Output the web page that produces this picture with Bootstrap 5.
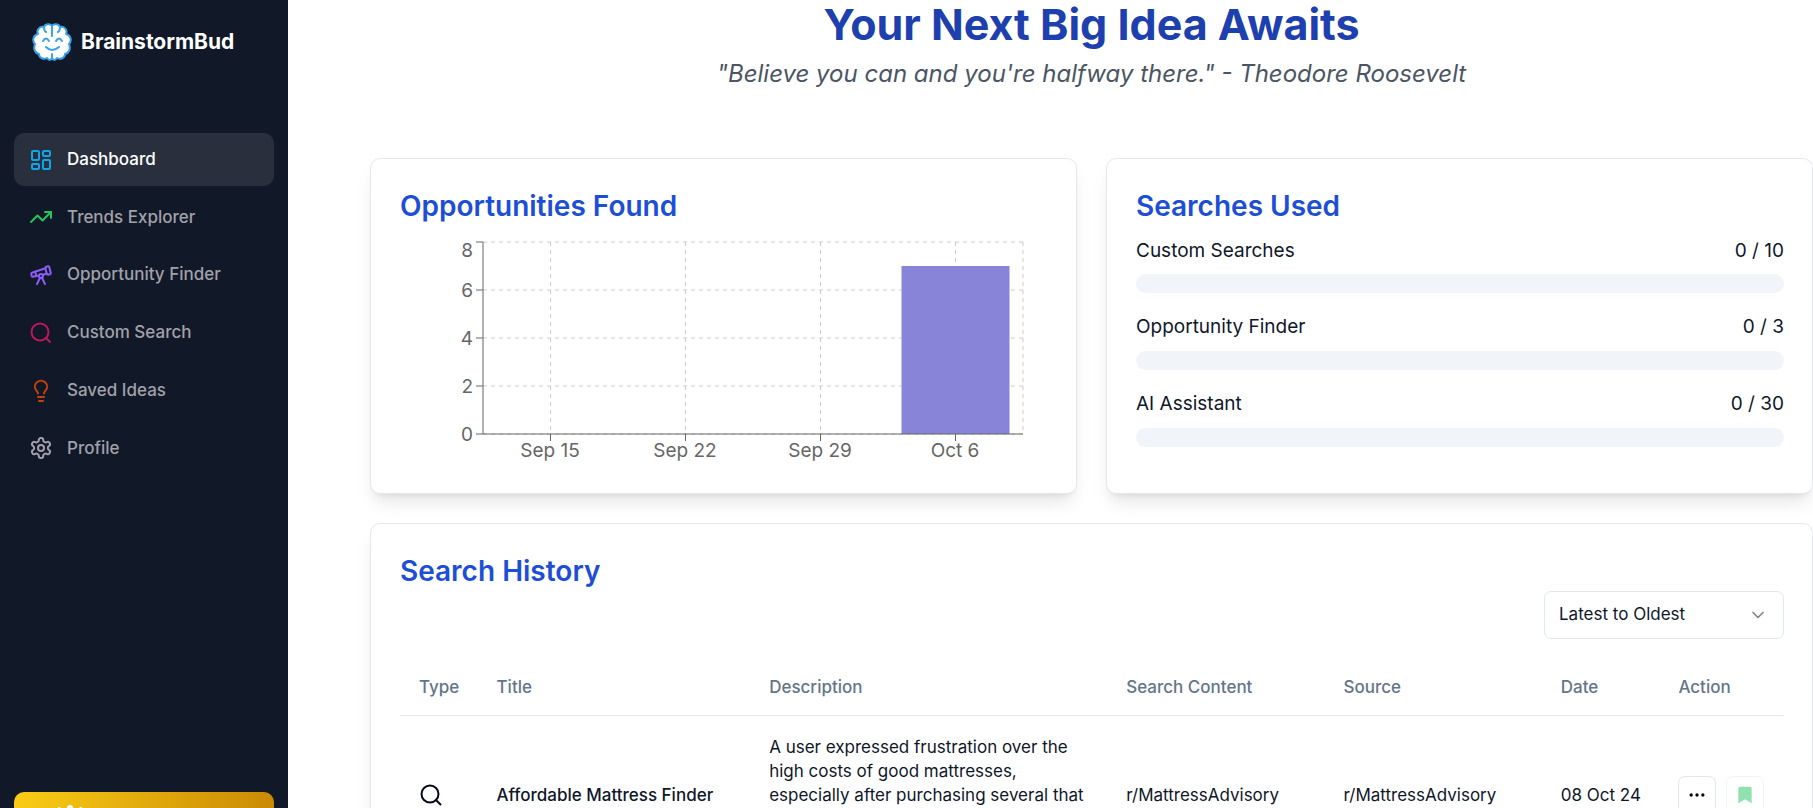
<!DOCTYPE html>
<html lang="en">
<head>
<meta charset="utf-8">
<meta name="viewport" content="width=device-width, initial-scale=1">
<title>BrainstormBud</title>
<link href="https://cdn.jsdelivr.net/npm/bootstrap@5.3.0/dist/css/bootstrap.min.css" rel="stylesheet">
<style>
  body { font-family: Inter, "Liberation Sans", sans-serif; color: #0f172a; background: #fff; }
  svg { display: block; flex: none; }
  .shell { height: 100vh; overflow: hidden; }
  .sidebar { width: 288px; flex: none; background: #111827; padding: 22px 14px 0; overflow: hidden; }
  .brand { padding-left: 18px; gap: 9px; color: #fff; font-size: 21px; font-weight: 700; line-height: 40px; margin-bottom: 71px; }
  .side-nav { min-height: 342px; }
  .side-link { height: 53px; padding: 0 15px; gap: 14px; border-radius: 10px; font-size: 17px; font-weight: 500; color: #a1a1aa; text-decoration: none; }
  .side-link.active { background: #292f3d; color: #fff; }
  .upgrade { height: 58px; flex: none; border: 0; border-radius: 10px; padding: 13px 44px; background: linear-gradient(90deg, #facc15, #ca8a04); color: #fff; margin-bottom: -42px; }
  .page { padding-left: 82px; min-width: 0; }
  .hero-title { font-size: 43px; line-height: 48px; font-weight: 700; color: #1e40af; margin: 0 0 9px; }
  .quote { font-size: 24px; line-height: 34px; color: #4b5563; margin: 0 0 67px; font-style: italic; }
  .panels { gap: 29px; }
  .panel { border: 1px solid #e2e8f0; border-radius: 10px; padding: 28px 28px 28px 29px; background: #fff; box-shadow: 0 12px 18px -4px rgba(0,0,0,.1), 0 5px 7px -5px rgba(0,0,0,.1); }
  .panel-title { font-size: 28px; line-height: 39px; font-weight: 600; color: #1d4ed8; margin: 0; }
  .chart-box { height: 239px; padding-top: 1px; }
  .chart-box svg { width: 100%; height: 240px; overflow: visible; }
  .chart-box text { font-size: 19px; fill: #666; }
  .usage { font-size: 19px; line-height: 28px; margin-top: 11px; }
  .usage + .usage { margin-top: 20px; }
  .usage .progress { height: 19px; margin-top: 9px; border-radius: 10px; background: #f1f5f9; }
  .usage + .usage .progress { margin-top: 10px; }
  .sort { width: 240px; height: 48px; border: 1px solid #e2e8f0; border-radius: 7px; padding: 0 14px; font-size: 17px; color: #0f172a; background-position: right 15px center; background-size: 20px; background-image: url("data:image/svg+xml,%3Csvg xmlns='http://www.w3.org/2000/svg' viewBox='0 0 24 24' fill='none' stroke='%23808590' stroke-width='2' stroke-linecap='round' stroke-linejoin='round'%3E%3Cpath d='m6 9 6 6 6-6'/%3E%3C/svg%3E"); }
  .history { font-size: 17px; line-height: 24px; table-layout: fixed; margin: 19px 0 0; --bs-table-bg: transparent; color: #0f172a; }
  .history > :not(caption) > * > * { padding: 19px; border-color: #e2e8f0; color: inherit; }
  .history > thead > tr > th { font-weight: 500; color: #64748b; padding-top: 17px; padding-bottom: 16px; }
  .history tbody tr { height: 158px; }
  .history > tbody > tr > td { vertical-align: middle; }
  .history > tbody > tr > td.desc { vertical-align: top; }
  .acts { gap: 10px; }
  .act { width: 38px; height: 38px; flex: none; border: 1px solid #e2e8f0; border-radius: 7px; background: #fff; padding: 0; }
  .act:disabled { opacity: .5; }
</style>
</head>
<body>
<div class="shell d-flex">
  <aside class="sidebar d-flex flex-column">
    <div class="brand d-flex align-items-center">
      <svg width="40" height="38" viewBox="0 0 40 38" fill="#fff" stroke="#38a3ea" stroke-width="2" stroke-linecap="round" stroke-linejoin="round"><path d="M20 3C18 0 13 1 12 4C8 3 4 7 6 11C1 12 0 18 3 21C1 26 3 30 7 31C7 35 12 37 15 35C17 38 19 37 20 35C21 37 23 38 25 35C28 37 33 35 33 31C37 30 39 26 37 21C40 18 39 12 34 11C36 7 32 3 28 4C27 1 22 0 20 3Z"/><path d="M20 3V13M12 4Q12 8 14 9M28 4Q28 8 26 9M20 35V31M11 18Q14 13 17 18M24 18Q27 13 30 18M14 24Q20 30 27 24" fill="none"/></svg>
      <span>BrainstormBud</span>
    </div>
    <nav class="side-nav d-flex flex-column justify-content-between">
      <a href="#" class="side-link active d-flex align-items-center"><svg width="24" height="24" viewBox="0 0 24 24" fill="none" stroke="#0ea5e9" stroke-width="2" stroke-linecap="round" stroke-linejoin="round"><rect width="7" height="9" x="3" y="3" rx="1"/><rect width="7" height="5" x="14" y="3" rx="1"/><rect width="7" height="9" x="14" y="12" rx="1"/><rect width="7" height="5" x="3" y="16" rx="1"/></svg>Dashboard</a>
      <a href="#" class="side-link d-flex align-items-center"><svg width="24" height="24" viewBox="0 0 24 24" fill="none" stroke="#22c55e" stroke-width="2" stroke-linecap="round" stroke-linejoin="round"><path d="m22 7-8.500 8.500-5-5L2 17"/><path d="M16 7h6v6"/></svg>Trends Explorer</a>
      <a href="#" class="side-link d-flex align-items-center"><svg width="24" height="24" viewBox="0 0 24 24" fill="none" stroke="#8b5cf6" stroke-width="2" stroke-linecap="round" stroke-linejoin="round"><path d="m10.065 12.493-6.180 1.318a.934.934 0 0 1-1.108-.702l-.537-2.150a1.070 1.070 0 0 1 .691-1.265l13.504-4.440"/><path d="m13.560 11.747 4.332-.924"/><path d="m16 21-3.105-6.210"/><path d="M16.485 5.940a2 2 0 0 1 1.455-2.425l1.090-.272a1 1 0 0 1 1.212.727l1.515 6.060a1 1 0 0 1-.727 1.213l-1.090.272a2 2 0 0 1-2.425-1.455z"/><path d="m6.158 8.633 1.114 4.456"/><path d="m8 21 3.105-6.210"/><circle cx="12" cy="13" r="2"/></svg>Opportunity Finder</a>
      <a href="#" class="side-link d-flex align-items-center"><svg width="24" height="24" viewBox="0 0 24 24" fill="none" stroke="#be185d" stroke-width="2" stroke-linecap="round" stroke-linejoin="round"><circle cx="11" cy="11" r="8.500"/><path d="m21 21-4-4"/></svg>Custom Search</a>
      <a href="#" class="side-link d-flex align-items-center"><svg width="24" height="24" viewBox="0 0 24 24" fill="none" stroke="#c2410c" stroke-width="2" stroke-linecap="round" stroke-linejoin="round"><path d="M9 14.500c-.3-1.500-1-2.300-1.700-3.100A6 6 0 1 1 16.700 11.400c-.7.800-1.400 1.600-1.700 3.100M9 18h6M10 22h4"/></svg>Saved Ideas</a>
      <a href="#" class="side-link d-flex align-items-center"><svg width="24" height="24" viewBox="0 0 24 24" fill="none" stroke="#a1a1aa" stroke-width="2" stroke-linecap="round" stroke-linejoin="round"><path d="M12.220 2h-.44a2 2 0 0 0-2 2v.18a2 2 0 0 1-1 1.730l-.43.250a2 2 0 0 1-2 0l-.15-.08a2 2 0 0 0-2.730.730l-.22.380a2 2 0 0 0 .730 2.730l.150.100a2 2 0 0 1 1 1.720v.510a2 2 0 0 1-1 1.740l-.15.090a2 2 0 0 0-.730 2.730l.220.380a2 2 0 0 0 2.730.730l.150-.080a2 2 0 0 1 2 0l.430.250a2 2 0 0 1 1 1.730V20a2 2 0 0 0 2 2h.440a2 2 0 0 0 2-2v-.180a2 2 0 0 1 1-1.730l.430-.250a2 2 0 0 1 2 0l.150.080a2 2 0 0 0 2.730-.730l.220-.390a2 2 0 0 0-.730-2.730l-.150-.080a2 2 0 0 1-1-1.740v-.500a2 2 0 0 1 1-1.740l.150-.090a2 2 0 0 0 .730-2.730l-.220-.380a2 2 0 0 0-2.730-.730l-.150.080a2 2 0 0 1-2 0l-.430-.250a2 2 0 0 1-1-1.730V4a2 2 0 0 0-2-2z"/><circle cx="12" cy="12" r="3"/></svg>Profile</a>
    </nav>
    <button type="button" class="upgrade mt-auto d-flex" aria-label="Upgrade"><svg width="24" height="24" viewBox="0 0 24 24" fill="#fff"><circle cx="12" cy="3" r="3"/><circle cx="1" cy="4" r="2"/><circle cx="23" cy="4" r="2"/><path d="M1 5l5 6 6-9 6 9 5-6-2 16H3z"/></svg></button>
  </aside>

  <main class="page flex-fill">
    <header class="text-center">
      <h1 class="hero-title">Your Next Big Idea Awaits</h1>
      <p class="quote">"Believe you can and you're halfway there." - Theodore Roosevelt</p>
    </header>
    <div class="panels d-grid">
      <div class="panels d-flex">
        <section class="panel flex-fill w-50">
          <h2 class="panel-title">Opportunities Found</h2>
          <div class="chart-box">
            <svg viewBox="1 0 648 240" role="img" aria-label="Opportunities found per week">
              <g stroke="#ccc" stroke-dasharray="4 4" fill="none"><path d="M84 15H624M84 63H624M84 111H624M84 159H624M84 207H624"/><path d="M151.500 15V207M286.500 15V207M421.500 15V207M556.500 15V207M624 15V207"/></g>
              <rect x="502.500" y="39" width="108" height="168" fill="#8884d8"/>
              <path d="M84 15V207M77 15H84M77 63H84M77 111H84M77 159H84M77 207H624M151.500 207V214M286.500 207V214M421.500 207V214M556.500 207V214" stroke="#666" fill="none"/>
              <g text-anchor="end"><text x="74" y="30">8</text><text x="74" y="70">6</text><text x="74" y="118">4</text><text x="74" y="166">2</text><text x="74" y="214">0</text></g>
              <g text-anchor="middle"><text x="151" y="230">Sep 15</text><text x="286" y="230">Sep 22</text><text x="421" y="230">Sep 29</text><text x="556" y="230">Oct 6</text></g>
            </svg>
          </div>
        </section>
        <section class="panel flex-fill w-50">
          <h2 class="panel-title">Searches Used</h2>
          <div class="usage"><div class="d-flex justify-content-between"><span>Custom Searches</span><span>0 / 10</span></div><div class="progress" role="progressbar" aria-label="Custom Searches" aria-valuenow="0" aria-valuemin="0" aria-valuemax="10"></div></div>
          <div class="usage"><div class="d-flex justify-content-between"><span>Opportunity Finder</span><span>0 / 3</span></div><div class="progress" role="progressbar" aria-label="Opportunity Finder" aria-valuenow="0" aria-valuemin="0" aria-valuemax="3"></div></div>
          <div class="usage"><div class="d-flex justify-content-between"><span>AI Assistant</span><span>0 / 30</span></div><div class="progress" role="progressbar" aria-label="AI Assistant" aria-valuenow="0" aria-valuemin="0" aria-valuemax="30"></div></div>
        </section>
      </div>
      <section class="panel">
        <h2 class="panel-title">Search History</h2>
        <div class="d-flex justify-content-end">
          <select class="form-select sort" aria-label="Sort order"><option>Latest to Oldest</option><option>Oldest to Latest</option></select>
        </div>
        <table class="table history">
          <colgroup><col style="width:5.600%"><col style="width:19.700%"><col style="width:25.800%"><col style="width:15.700%"><col style="width:15.700%"><col style="width:8.500%"><col></colgroup>
          <thead><tr><th>Type</th><th>Title</th><th>Description</th><th>Search Content</th><th>Source</th><th>Date</th><th>Action</th></tr></thead>
          <tbody>
            <tr>
              <td><svg width="24" height="24" viewBox="0 0 24 24" fill="none" stroke="#020817" stroke-width="2" stroke-linecap="round"><circle cx="11" cy="11" r="8.500"/><path d="m21.500 21.500-4.300-4.300"/></svg></td>
              <td class="fw-medium" style="font-weight:500">Affordable Mattress Finder</td>
              <td class="desc">A user expressed frustration over the high costs of good mattresses, especially after purchasing several that</td>
              <td>r/MattressAdvisory</td>
              <td>r/MattressAdvisory</td>
              <td class="text-nowrap">08 Oct 24</td>
              <td><div class="acts d-flex">
                <button type="button" class="act d-flex align-items-center justify-content-center" aria-label="More"><svg width="20" height="20" viewBox="0 0 24 24" fill="#020817"><circle cx="5" cy="12" r="2"/><circle cx="12" cy="12" r="2"/><circle cx="19" cy="12" r="2"/></svg></button>
                <button type="button" class="act d-flex align-items-center justify-content-center" aria-label="Saved" disabled><svg width="20" height="20" viewBox="0 0 24 24" fill="#22c55e"><path d="M4 4a2 2 0 0 1 2-2h12a2 2 0 0 1 2 2v18l-8-5-8 5z"/></svg></button>
              </div></td>
            </tr>
          </tbody>
        </table>
      </section>
    </div>
  </main>
</div>
<script src="https://cdn.jsdelivr.net/npm/bootstrap@5.3.0/dist/js/bootstrap.bundle.min.js"></script>
</body>
</html>
